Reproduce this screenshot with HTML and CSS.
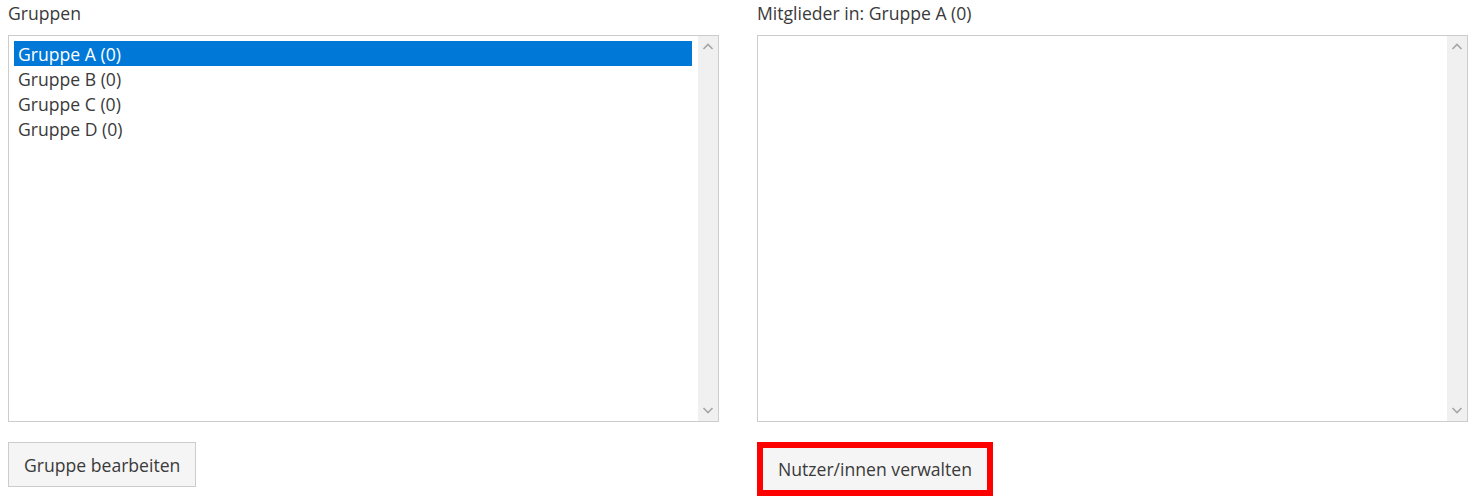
FILE: index.html
```html
<!DOCTYPE html>
<html lang="de">
<head>
<meta charset="utf-8">
<title>Gruppen</title>
<link rel="stylesheet" href="styles.css">
</head>
<body>
<div class="page">
  <div class="column">
    <div class="label">Gruppen</div>
    <div class="listbox">
      <div class="items">
        <div class="item selected">Gruppe A (0)</div>
        <div class="item">Gruppe B (0)</div>
        <div class="item">Gruppe C (0)</div>
        <div class="item">Gruppe D (0)</div>
      </div>
      <div class="scrollbar">
        <svg class="arrow" width="20" height="20" viewBox="0 0 20 20"><path d="M5.5 12 L10 7.5 L14.5 12" fill="none" stroke="#a6a6a6" stroke-width="1.6"/></svg>
        <svg class="arrow" width="20" height="20" viewBox="0 0 20 20"><path d="M5.5 8 L10 12.5 L14.5 8" fill="none" stroke="#a6a6a6" stroke-width="1.6"/></svg>
      </div>
    </div>
    <div class="actions">
      <button class="btn">Gruppe bearbeiten</button>
    </div>
  </div>
  <div class="column">
    <div class="label">Mitglieder in: Gruppe A (0)</div>
    <div class="listbox">
      <div class="items"></div>
      <div class="scrollbar">
        <svg class="arrow" width="20" height="20" viewBox="0 0 20 20"><path d="M5.5 12 L10 7.5 L14.5 12" fill="none" stroke="#a6a6a6" stroke-width="1.6"/></svg>
        <svg class="arrow" width="20" height="20" viewBox="0 0 20 20"><path d="M5.5 8 L10 12.5 L14.5 8" fill="none" stroke="#a6a6a6" stroke-width="1.6"/></svg>
      </div>
    </div>
    <div class="actions">
      <div class="highlight">
        <button class="btn inner">Nutzer/innen verwalten</button>
      </div>
    </div>
  </div>
</div>
</body>
</html>
```

FILE: styles.css
```css
html, body {
  margin: 0;
  padding: 0;
  background: #ffffff;
}
body {
  font-family: "Open Sans", "Noto Sans", sans-serif;
  font-size: 17.6px;
  color: #3a3a3a;
}
.page {
  display: flex;
  gap: 38px;
  padding: 0 9px 0 8px;
}
.column {
  width: 711px;
  display: flex;
  flex-direction: column;
}
.label {
  height: 35px;
  line-height: 26px;
}
.listbox {
  height: 387px;
  box-sizing: border-box;
  border: 1px solid #cccccc;
  display: flex;
}
.items {
  flex: 1;
  padding: 5px 6px 0 5px;
}
.item {
  height: 25px;
  line-height: 27px;
  padding-left: 4px;
  color: #3a3a3a;
  overflow: hidden;
}
.item.selected {
  background: #0078d7;
  color: #ffffff;
}
.scrollbar {
  width: 20px;
  background: #f0f0f0;
  display: flex;
  flex-direction: column;
  justify-content: space-between;
  padding: 1px 0;
}
.arrow {
  display: block;
}
.actions {
  padding-top: 20px;
  display: flex;
}
.btn {
  font-family: inherit;
  font-size: 17.6px;
  color: #3a3a3a;
  background: #f5f5f5;
  border: 1px solid #cccccc;
  height: 45px;
  padding: 0 15px;
  margin: 0;
}
.highlight {
  border: 6px solid #ff0000;
  display: flex;
}
.btn.inner {
  border: none;
  height: 42px;
  width: 224px;
  padding: 0;
}
```
